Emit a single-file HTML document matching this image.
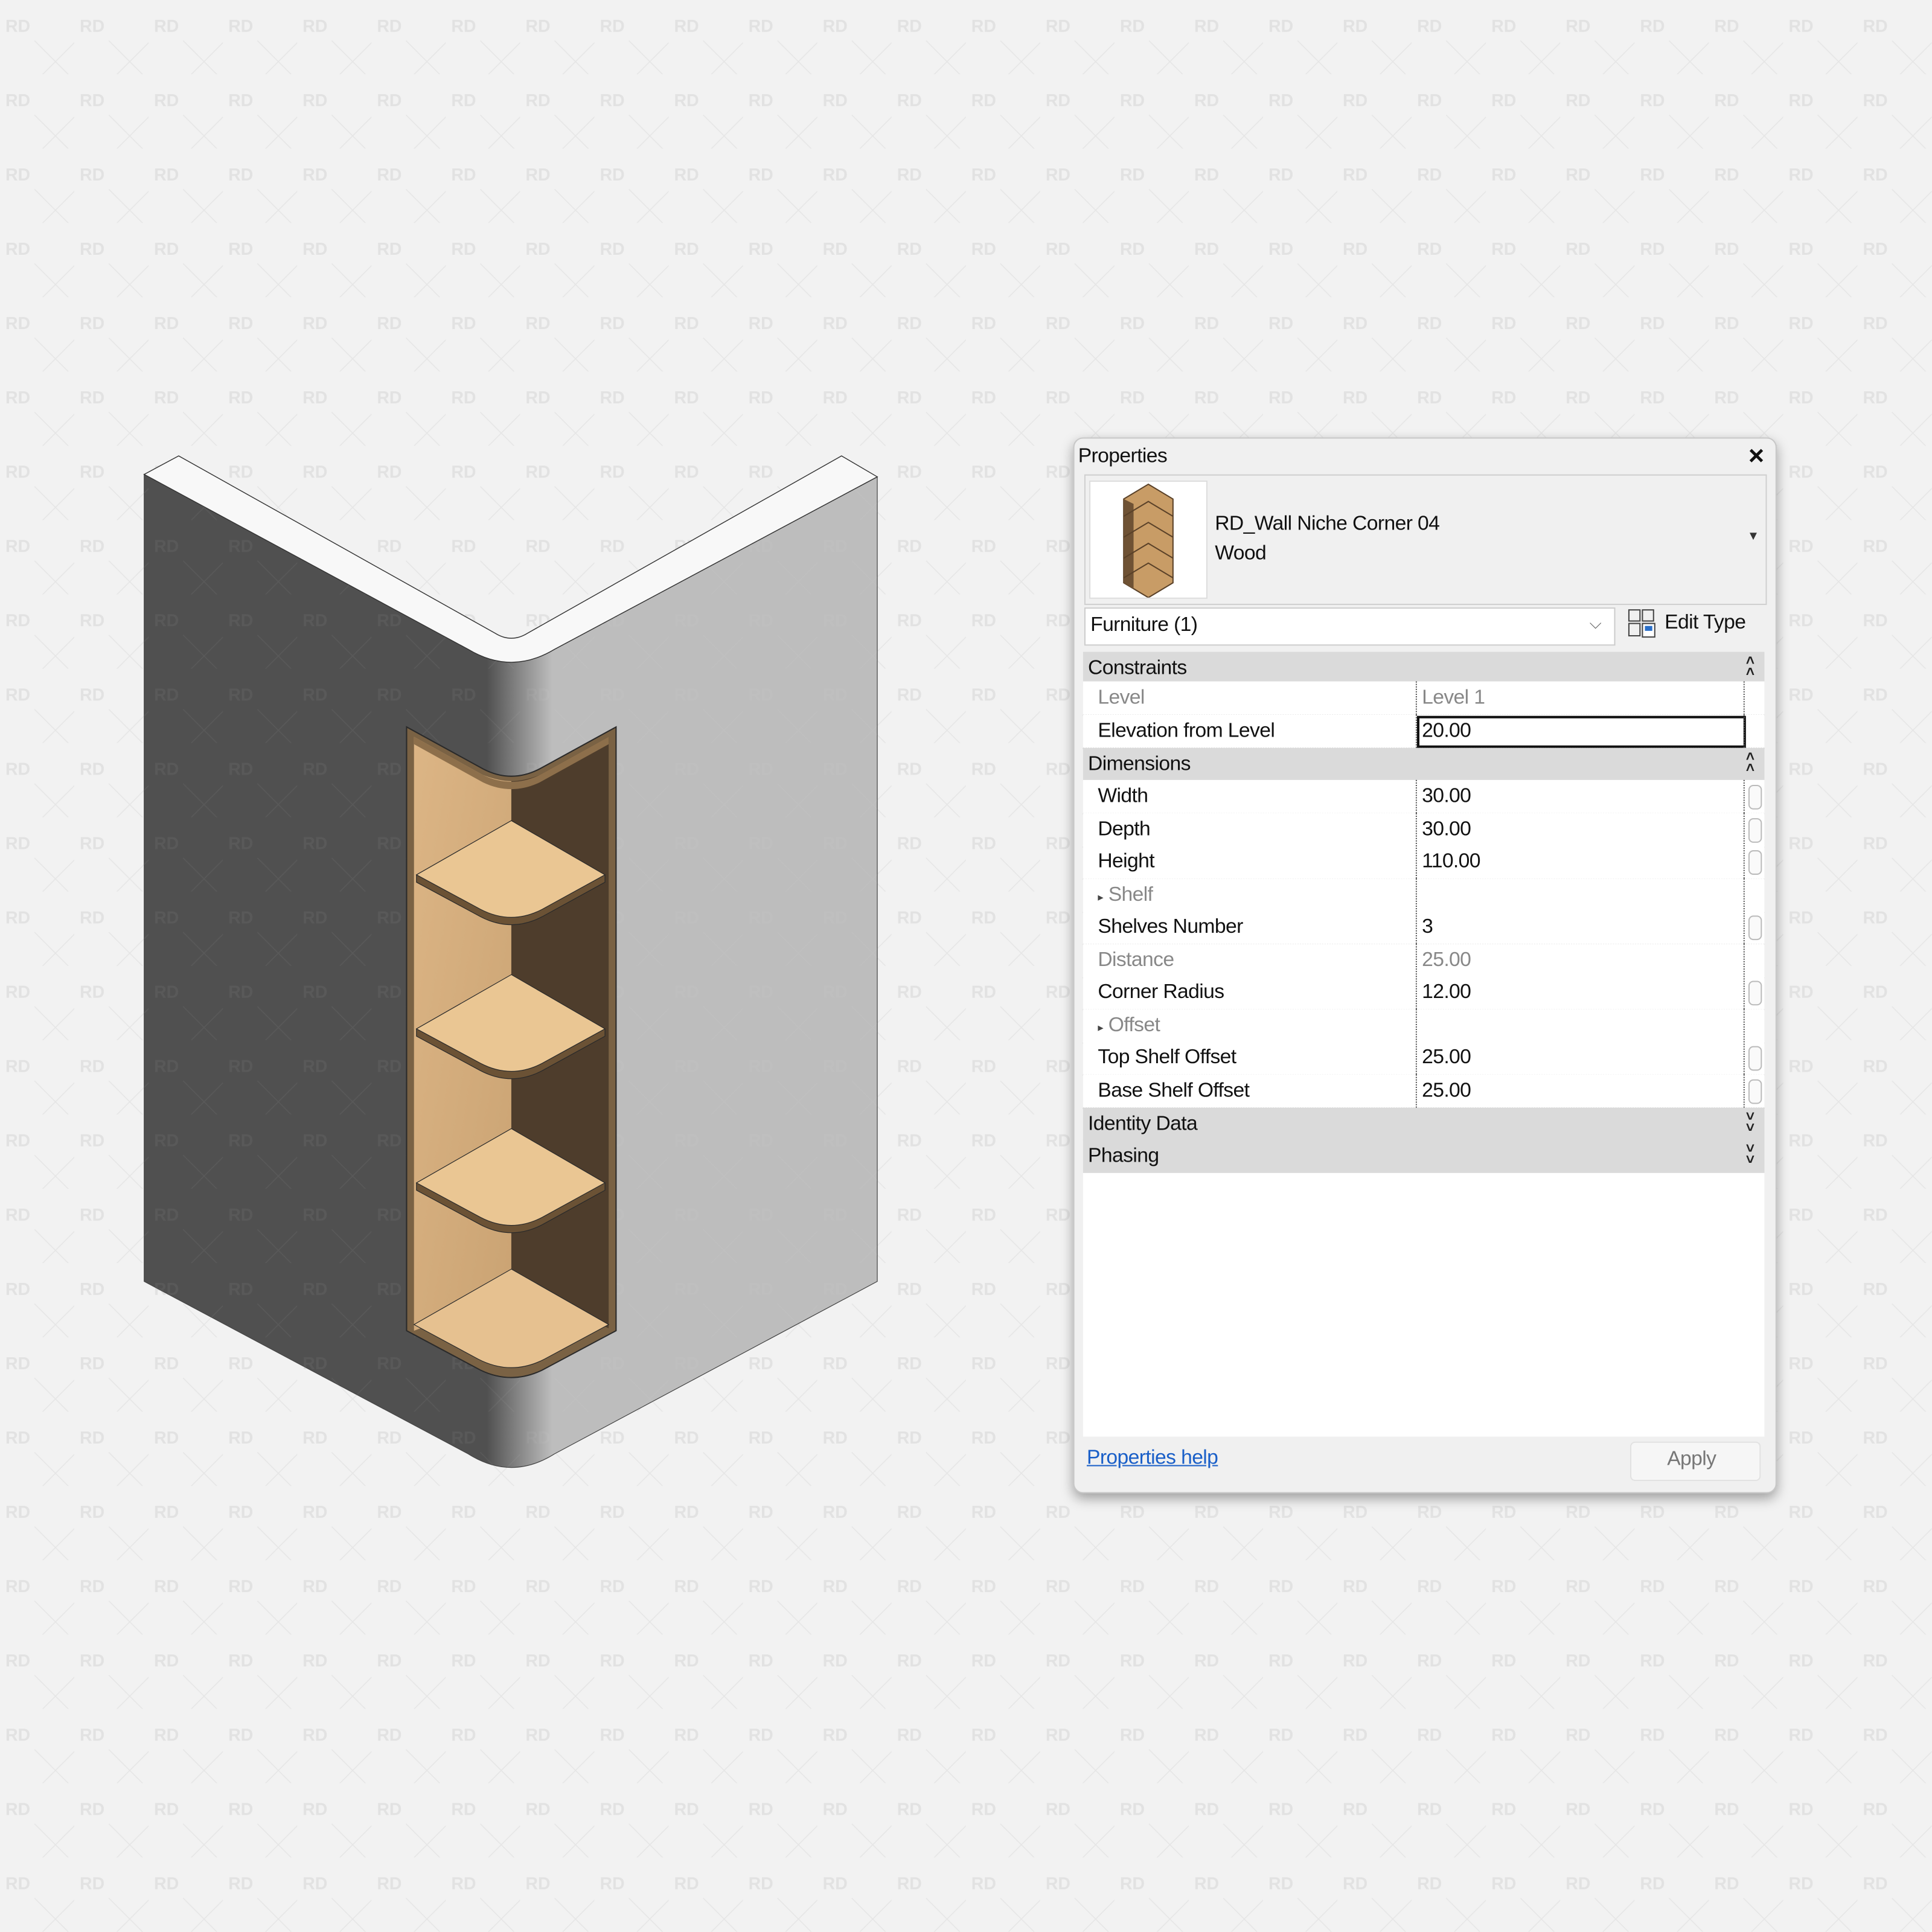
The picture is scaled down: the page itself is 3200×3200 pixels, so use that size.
<!DOCTYPE html>
<html><head><meta charset="utf-8">
<style>
html,body{margin:0;padding:0;background:#f2f2f2;width:3200px;height:3200px;overflow:hidden}
#root{position:absolute;left:0;top:0;width:1568px;height:1568px;transform:scale(2.0408);transform-origin:0 0;font-family:"Liberation Sans",sans-serif}
.abs{position:absolute}
#panel{left:871px;top:355px;width:569px;height:855px;background:#f0f0f0;border:1px solid #c8c8c8;border-radius:8px;box-shadow:0 4px 10px rgba(0,0,0,0.35);overflow:hidden}
.t{position:absolute;font-size:16.5px;color:#111;white-space:nowrap;letter-spacing:-0.3px}
.row{position:absolute;left:7px;width:553px;height:26.6px;background:#fff;border-bottom:1px dotted #555}
.row .l{position:absolute;left:12px;top:4px;font-size:16.5px;color:#111;letter-spacing:-0.3px}
.row .v{position:absolute;left:270px;top:0;height:26.6px;width:265px;border-left:1px dotted #555}
.row .v span{position:absolute;left:4px;top:4px;font-size:16.5px;color:#111;letter-spacing:-0.3px}
.row .c{position:absolute;left:536px;top:0;height:26.6px;width:17px;border-left:1px dotted #555}
.row .c i{position:absolute;left:3px;top:4px;width:9px;height:18px;border:1px solid #bbb;border-radius:4px;background:#fafafa}
.g{color:#888!important}
.hdr{position:absolute;left:7px;width:553px;height:26.6px;background:#dadada}
.hdr span{position:absolute;left:4px;top:4px;font-size:16.5px;color:#111;letter-spacing:-0.3px}
.hdr b{position:absolute;right:8px;top:3px;font-size:12px;font-weight:bold;color:#222;line-height:9px}
</style></head><body>
<div id="root">
<svg class="abs" style="left:0;top:0" width="1568" height="1568" viewBox="0 0 1568 1568">
<defs>
<pattern id="wm" x="0" y="0" width="60.3" height="60.3" patternUnits="userSpaceOnUse">
<text x="14.5" y="26" font-family="Liberation Sans" font-weight="bold" font-size="14" fill="#e2e2e2" text-anchor="middle">RD</text>
<path d="M28,33 L62,67 M62,33 L28,67" stroke="#e6e6e6" stroke-width="0.8"/>
</pattern>
<linearGradient id="lf" gradientUnits="userSpaceOnUse" x1="395" y1="0" x2="448" y2="0">
<stop offset="0" stop-color="#505050"/><stop offset="1" stop-color="#bdbdbd"/></linearGradient>
<linearGradient id="lw" x1="0" y1="0" x2="1" y2="1"><stop offset="0" stop-color="#dcb585"/><stop offset="1" stop-color="#caa373"/></linearGradient>
</defs>
<rect width="1568" height="1568" fill="#f2f2f2"/>
<rect width="1568" height="1568" fill="url(#wm)"/>
<path d="M117,385 L380,527 Q415,548 450,527 L712,387 L712,1040 L450,1180 Q415,1202 380,1180 L117,1040 Z" fill="url(#lf)" stroke="#444" stroke-width="0.6"/>
<path d="M145,370 L117,385 L380,527 Q415,548 450,527 L712,387 L683,370 L428,514 Q415,522 402,514 Z" fill="#f8f8f8" stroke="#333" stroke-width="0.7"/>
<path d="M117,385 L380,527 Q415,548 450,527 L712,387 L712,1040 L450,1180 Q415,1202 380,1180 L117,1040 Z" fill="url(#wm)" opacity="0.06"/>
<path d="M330,590 L392,624 Q415,636 438,624 L500,590 L500,1080 L440,1112 Q415,1124 390,1112 L330,1080 Z" fill="#7a6244" stroke="#2a2a2a" stroke-width="1"/>
<path d="M336,598 L392,629 Q405,634 415,634 L415,1050 L336,1080 Z" fill="url(#lw)"/>
<path d="M415,634 Q425,634 438,629 L494,598 L494,1078 L415,1040 Z" fill="#4e3d2c"/>
<path d="M336,598 L392,629 Q415,640 438,629 L494,598 L494,604 L438,635 Q415,646 392,635 L336,604 Z" fill="#8d6f4b"/>
<g id="shelf">
<path d="M338,710 L338,716 L390,744 Q415,757 440,744 L491,716 L491,710 Z" fill="#6b5235" stroke="#2a2a2a" stroke-width="0.6"/>
<path d="M338,710 L415,666 L491,710 L440,738 Q415,751 390,738 Z" fill="#eac693" stroke="#2a2a2a" stroke-width="0.6"/>
</g>
<use href="#shelf" transform="translate(0,125)"/>
<use href="#shelf" transform="translate(0,250)"/>
<path d="M336,1075 L415,1030 L494,1075 L442,1103 Q415,1117 388,1103 Z" fill="#e6c190" stroke="#2a2a2a" stroke-width="0.6"/>
</svg>

<div id="panel" class="abs">
<div class="t" style="left:3px;top:5px;font-size:16.5px">Properties</div>
<div class="t" style="left:547px;top:1px;font-size:22px;font-weight:bold">×</div>
<div class="abs" style="left:8px;top:29px;width:552px;height:104px;border:1px solid #d0d0d0;background:#f0f0f0"></div>
<div class="abs" style="left:12px;top:34px;width:94px;height:94px;background:#fff;border:1px solid #ddd">
<svg width="94" height="94" viewBox="0 0 94 94"><path d="M27,14 L47,2 L67,14 L67,82 L47,94 L27,82 Z" fill="#c89c66" stroke="#5a4128"/><path d="M27,14 L27,82 L35,87 L35,18 Z" fill="#6f5234"/><path d="M27,28 L47,16 L67,28 M27,45 L47,33 L67,45 M27,62 L47,50 L67,62 M27,78 L47,66 L67,78" stroke="#5a4128" fill="none"/></svg></div>
<div class="t" style="left:114px;top:60px">RD_Wall Niche Corner 04</div>
<div class="t" style="left:114px;top:84px">Wood</div>
<div class="t" style="left:546px;top:74px;font-size:10px;color:#333">▼</div>
<div class="abs" style="left:8px;top:137px;width:429px;height:29px;background:#fff;border:1px solid #ccc"></div>
<div class="t" style="left:13px;top:142px">Furniture (1)</div>
<div class="t" style="left:418px;top:142px;color:#666;font-size:13px">⌵</div>
<svg class="abs" style="left:449px;top:138px" width="24" height="24" viewBox="0 0 24 24"><rect x="1" y="1" width="9" height="9" fill="none" stroke="#444"/><rect x="1" y="12" width="9" height="10" fill="none" stroke="#444"/><rect x="12" y="1" width="9" height="9" fill="none" stroke="#444"/><rect x="12" y="12" width="10" height="11" fill="#fff" stroke="#444"/><rect x="14" y="14" width="6" height="4" fill="#2a6fc9"/></svg>
<div class="t" style="left:479px;top:140px">Edit Type</div>

<div class="hdr" style="top:173px"><span>Constraints</span><b>˄<br>˄</b></div>
<div class="row" style="top:197px"><span class="l g">Level</span><div class="v"><span class="g">Level 1</span></div><div class="c"></div></div>
<div class="row" style="top:224px"><span class="l">Elevation from Level</span><div class="v"><span>20.00</span><div class="abs" style="left:0;top:1px;width:263px;height:22px;border:2px solid #111"></div></div><div class="c"></div></div>
<div class="hdr" style="top:251px"><span>Dimensions</span><b>˄<br>˄</b></div>
<div class="row" style="top:277px"><span class="l">Width</span><div class="v"><span>30.00</span></div><div class="c"><i></i></div></div>
<div class="row" style="top:304px"><span class="l">Depth</span><div class="v"><span>30.00</span></div><div class="c"><i></i></div></div>
<div class="row" style="top:330px"><span class="l">Height</span><div class="v"><span>110.00</span></div><div class="c"><i></i></div></div>
<div class="row" style="top:357px"><span class="l g"><small style="font-size:9px;color:#444">▸</small> Shelf</span><div class="v"></div><div class="c"></div></div>
<div class="row" style="top:383px"><span class="l">Shelves Number</span><div class="v"><span>3</span></div><div class="c"><i></i></div></div>
<div class="row" style="top:410px"><span class="l g">Distance</span><div class="v"><span class="g">25.00</span></div><div class="c"></div></div>
<div class="row" style="top:436px"><span class="l">Corner Radius</span><div class="v"><span>12.00</span></div><div class="c"><i></i></div></div>
<div class="row" style="top:463px"><span class="l g"><small style="font-size:9px;color:#444">▸</small> Offset</span><div class="v"></div><div class="c"></div></div>
<div class="row" style="top:489px"><span class="l">Top Shelf Offset</span><div class="v"><span>25.00</span></div><div class="c"><i></i></div></div>
<div class="row" style="top:516px"><span class="l">Base Shelf Offset</span><div class="v"><span>25.00</span></div><div class="c"><i></i></div></div>
<div class="hdr" style="top:543px"><span>Identity Data</span><b>˅<br>˅</b></div>
<div class="hdr" style="top:569px"><span>Phasing</span><b>˅<br>˅</b></div>
<div class="abs" style="left:7px;top:596px;width:553px;height:214px;background:#fff"></div>
<div class="t" style="left:10px;top:818px;color:#1a5fc8;text-decoration:underline">Properties help</div>
<div class="abs" style="left:451px;top:814px;width:104px;height:30px;background:#f6f6f6;border:1px solid #e2e2e2;border-radius:4px"></div>
<div class="t" style="left:481px;top:819px;color:#777">Apply</div>
</div>
</div>
</body></html>
